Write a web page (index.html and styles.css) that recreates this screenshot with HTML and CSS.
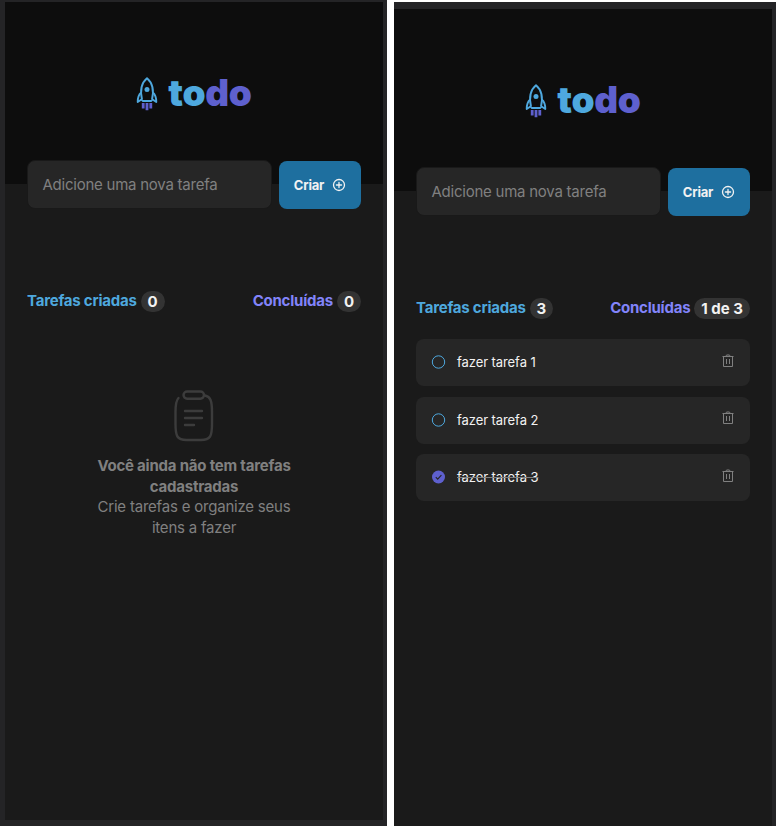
FILE: index.html
```html
<!DOCTYPE html>
<html lang="pt-BR">
<head>
<meta charset="utf-8">
<title>todo</title>
<link rel="stylesheet" href="styles.css">
</head>
<body>
<svg class="defs" width="0" height="0">
  <symbol id="rocket" viewBox="0 0 22 34">
    <g fill="none" stroke="#4ea8de" stroke-width="1.900" stroke-linejoin="round">
      <path d="M6 22.500C3.800 13 6 5.500 11 1.300c5 4.200 7.200 11.700 5 21.200"/>
      <path d="M5.200 15.500C2.500 17.800 1.700 20.500 1.700 25l3.700-2.500 1.300 1.500h8.600l1.300-1.500 3.700 2.500c0-4.500-.8-7.200-3.500-9.500"/>
    </g>
    <circle cx="11" cy="12.600" r="2.500" fill="#4ea8de"/>
    <path d="M7.200 26v5.500M11 26v7.300M14.800 26v5.500" fill="none" stroke="#5e60ce" stroke-width="2.800"/>
  </symbol>
  <symbol id="plus" viewBox="0 0 14 14">
    <g fill="none" stroke="#f2f2f2" stroke-width="1.300" stroke-linecap="round"><circle cx="7" cy="7" r="5.500"/><path d="M4.400 7h5.200M7 4.400v5.200"/></g>
  </symbol>
  <symbol id="trash" viewBox="0 0 12 14">
    <g fill="none" stroke="#808080" stroke-width="1"><path d="M.5 2.500h11M3.800 2.500Q4 1 5 1h2q1 0 1.200 1.500M1.500 3v9.500h9V3M4.500 5v5M7.500 5v5"/></g>
  </symbol>
</svg>
<main class="board">
  <section class="frame frame-left">
    <div class="screen">
      <header class="hero"><svg class="rocket"><use href="#rocket"/></svg><h1 class="brand">to<span>do</span></h1></header>
      <form class="form"><div class="field">Adicione uma nova tarefa</div><button class="create" type="button">Criar<svg class="plus"><use href="#plus"/></svg></button></form>
      <div class="stats">
        <div class="stat created"><span class="label">Tarefas criadas</span><span class="count">0</span></div>
        <div class="stat done"><span class="label">Concluídas</span><span class="count">0</span></div>
      </div>
      <div class="empty">
        <svg class="clipboard" viewBox="0 0 40 52">
          <g fill="none" stroke="#3c3c3c" stroke-width="2.400" stroke-linecap="round">
            <rect x="9.500" y="1.500" width="20.500" height="7.200" rx="3.600"/>
            <path d="M4.500 8C2 10.500 1.500 15 1.500 22v12c0 12 1.500 16 11 16h14.500c9.500 0 11-4 11-16V22C38 11 36.500 6.500 31 5.500M11 21h17M11 28h17M11 35h9"/>
          </g>
        </svg>
        <p><strong>Você ainda não tem tarefas<br>cadastradas</strong><br>Crie tarefas e organize seus<br>itens a fazer</p>
      </div>
    </div>
  </section>
  <section class="frame frame-right">
    <div class="screen">
      <header class="hero"><svg class="rocket"><use href="#rocket"/></svg><h1 class="brand">to<span>do</span></h1></header>
      <form class="form"><div class="field">Adicione uma nova tarefa</div><button class="create" type="button">Criar<svg class="plus"><use href="#plus"/></svg></button></form>
      <div class="stats">
        <div class="stat created"><span class="label">Tarefas criadas</span><span class="count">3</span></div>
        <div class="stat done"><span class="label">Concluídas</span><span class="count">1 de 3</span></div>
      </div>
      <ul class="tasks">
        <li class="task"><svg class="check" viewBox="0 0 14 14"><circle cx="7.500" cy="7" r="6.200" fill="none" stroke="#4ea8de"/></svg><span class="name">fazer tarefa 1</span><svg class="trash"><use href="#trash"/></svg></li>
        <li class="task"><svg class="check" viewBox="0 0 14 14"><circle cx="7.500" cy="7" r="6.200" fill="none" stroke="#4ea8de"/></svg><span class="name">fazer tarefa 2</span><svg class="trash"><use href="#trash"/></svg></li>
        <li class="task complete"><svg class="check" viewBox="0 0 14 14"><circle cx="7.500" cy="7" r="6.500" fill="#5e60ce"/><path d="M4.800 7.200l1.900 1.900 3.700-3.900" fill="none" stroke="#262626" stroke-width="1.200"/></svg><span class="name">fazer tarefa 3</span><svg class="trash"><use href="#trash"/></svg></li>
      </ul>
    </div>
  </section>
</main>
</body>
</html>
```

FILE: styles.css
```css
* { box-sizing: border-box; }
body { margin: 0; background: #fff; font-family: Inter, sans-serif; }
.defs { display: block; }
.board { display: grid; grid-template-columns: 387px 382px; column-gap: 7px; height: 826px; }
.frame { background: #242426; }
.frame-left { padding: 2px 4px 6px 5px; }
.frame-right { margin-top: 2px; padding: 7px 4px 0 0; }
.screen { height: 100%; background: #1a1a1a; overflow: hidden; }
.hero { height: 182px; background: #0d0d0d; display: flex; justify-content: center; align-items: flex-start; gap: 10px; padding-top: 75px; }
.rocket { width: 22px; height: 34px; }
.brand { margin: -6px 0 0; font-size: 37px; line-height: 44px; font-weight: 900; letter-spacing: -0.3px; color: #4ea8de; }
.brand span { color: #5e60ce; }
.form { display: flex; gap: 7px; height: 49px; margin: -24px 22px 0; align-items: stretch; }
.field { flex: 1; border: 1px solid #191919; border-radius: 8px; background: #262626; color: #808080; font-size: 15px; letter-spacing: -0.24px; line-height: 48px; padding-left: 14.500px; }
.create { width: 82px; height: 48px; margin-top: 1px; padding: 0 0 1px; border: 0; border-radius: 8px; background: #1e6f9f; color: #f2f2f2; font: 700 13px Inter, sans-serif; letter-spacing: -0.2px; display: flex; align-items: center; justify-content: center; gap: 8px; }
.plus { width: 14px; height: 14px; }
.stats { display: flex; justify-content: space-between; height: 22px; margin: 82px 22px 0; }
.stat { display: flex; align-items: flex-start; gap: 4px; font-size: 15px; font-weight: 700; line-height: 20px; }
.label { letter-spacing: -0.23px; }
.created { color: #4ea8de; }
.done { color: #8284fa; }
.count { height: 21px; padding: 0 7px; border-radius: 11px; background: #333; color: #f2f2f2; line-height: 22px; }
.empty { margin-top: 77px; text-align: center; color: #808080; letter-spacing: -0.21px; }
.clipboard { display: block; width: 40px; height: 52px; margin: 0 auto; }
.empty p { margin: 14px 0 0; font-size: 15px; line-height: 20.700px; }
.tasks { list-style: none; margin: 19px 22px 0; padding: 0; display: grid; gap: 10.500px; }
.task { height: 47px; display: flex; align-items: center; border-radius: 8px; background: #262626; padding: 0 16px 1px 15px; }
.check { width: 14px; height: 14px; overflow: visible; }
.name { flex: 1; margin-left: 12px; color: #f2f2f2; font-size: 13px; letter-spacing: -0.08px; line-height: 20px; }
.complete .name { text-decoration: line-through #808080; }
.trash { width: 12px; height: 14px; margin-bottom: 3px; }
```
